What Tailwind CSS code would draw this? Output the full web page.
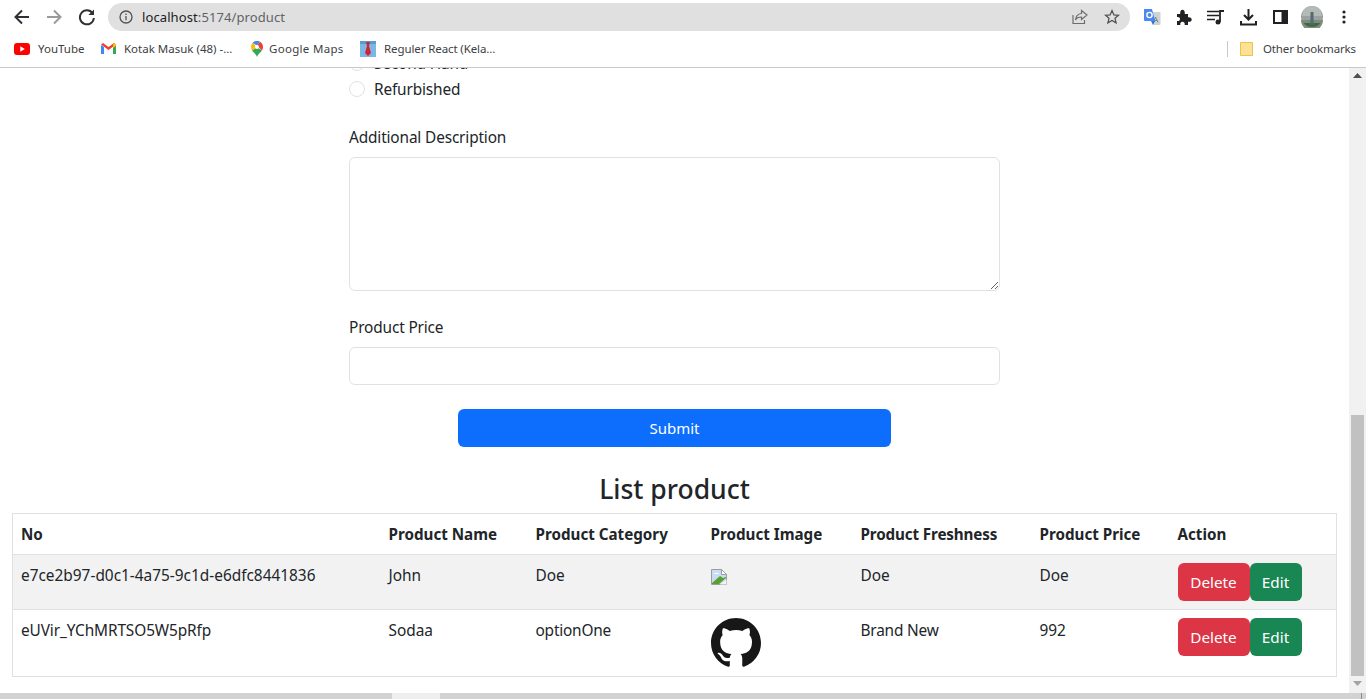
<!doctype html>
<html lang="en">
<head>
<meta charset="utf-8">
<title>Product</title>
<script src="https://cdn.jsdelivr.net/npm/@tailwindcss/browser@4"></script>
</head>
<body class="m-0 overflow-hidden bg-white font-['Noto_Sans','Open_Sans',sans-serif] text-[#212529]">
<div class="flex h-[699px] w-[1366px] flex-col overflow-hidden">

  <!-- toolbar -->
  <header class="flex h-[34px] shrink-0 items-center bg-white">
    <div class="flex w-[108px] items-center pl-[13px] text-[#3c4043]">
      <svg class="h-[18px] w-[18px]" viewBox="0 0 18 18" fill="none" stroke="#303134" stroke-width="2"><path d="M16 9H3M9 2.500 2.500 9 9 15.500"/></svg>
      <svg class="ml-[14px] h-[18px] w-[18px]" viewBox="0 0 18 18" fill="none" stroke="#9a9a9a" stroke-width="2"><path d="M2 9h13M9 2.500 15.500 9 9 15.500"/></svg>
      <svg class="ml-[15px] h-[18px] w-[18px]" viewBox="0 0 18 18" fill="none" stroke="#303134" stroke-width="2"><path d="M14.600 5.200A7 7 0 1 0 15.900 10"/><path d="M16 1.500v5.600h-5.600z" fill="#303134" stroke="none"/></svg>
    </div>
    <div class="flex h-[28px] w-[1022px] items-center rounded-full bg-[#e0e0e0] pl-[11px] pr-[10px]">
      <svg class="h-[14px] w-[14px] shrink-0" viewBox="0 0 14 14" fill="none" stroke="#505356" stroke-width="1.300"><circle cx="7" cy="7" r="6"/><path d="M7 6v4.200M7 3.600v1.300"/></svg>
      <span class="ml-[9px] pt-[1px] text-[13px] tracking-[0.1px]"><span class="text-[#202124]">localhost</span><span class="text-[#5f6368]">:5174/product</span></span>
      <svg class="ml-auto h-[16px] w-[16px]" viewBox="0 0 16 16" fill="none" stroke="#6a6d70" stroke-width="1.200"><path d="M1 6v8.500h11.500V11"/><path d="M9.500 1.500 15 6l-5.500 4.500V8C6.500 8 4.500 9 3.500 11 3.800 7.500 6 4.800 9.500 4.500z"/></svg>
      <svg class="ml-[16px] h-[16px] w-[16px]" viewBox="0 0 16 16" fill="none" stroke="#505356" stroke-width="1.300"><path d="m8 1.600 1.900 4.300 4.600.4-3.500 3 1.100 4.600L8 11.500l-4.100 2.400L5 9.300l-3.500-3 4.600-.4z"/></svg>
    </div>
    <div class="flex flex-1 items-center">
      <svg class="ml-[14px] h-[17px] w-[17px]" viewBox="0 0 17 17"><path d="M6 3h9.500a1 1 0 0 1 1 1v11a1 1 0 0 1-1 1H9z" fill="#cfd3d2"/><path d="m11.500 8 2.400 5.400M11.500 8l-2 5.400M10 11.500h3.300" stroke="#6d8c8a" fill="none"/><path d="M0 0h8l3.200 12H1a1 1 0 0 1-1-1z" fill="#4a89f3"/><path d="M7 12 9 16l2-4z" fill="#3a6fd0"/><circle cx="5.500" cy="6" r="2.600" fill="none" stroke="#fff" stroke-width="1.400"/></svg>
      <svg class="ml-[15px] h-[16px] w-[16px]" viewBox="0 0 16 16" fill="#202124"><path d="M1 5h3.200C4 2 5 .8 6.500.8S9 2 8.800 5H12v3.200c2.600-.3 3.700.8 3.700 2.300s-1.100 2.600-3.700 2.300V16H8.700c.3-2.400-.8-3.300-2.200-3.300S4 13.600 4.300 16H1v-4c2.200.3 3-.7 3-2S3.200 7.700 1 8z"/></svg>
      <svg class="ml-[15px] h-[17px] w-[18px]" viewBox="0 0 18 17" fill="none" stroke="#202124" stroke-width="1.500"><path d="M0 2.500h12M0 6.500h12M0 10.500h8"/><circle cx="11" cy="13" r="2.500" fill="#202124" stroke="none"/><path d="M13 13V2h4" stroke-width="1.800"/></svg>
      <svg class="ml-[15px] h-[18px] w-[17px]" viewBox="0 0 17 18" fill="none" stroke="#202124" stroke-width="2"><path d="M8.500 1v10M4 7l4.500 4.500L13 7M1 13v3.500h15V13"/></svg>
      <svg class="ml-[16px] h-[14px] w-[15px]" viewBox="0 0 15 14"><path d="M0 0h15v14H0zM2 2v10h6.500V2z" fill="#202124" fill-rule="evenodd"/></svg>
      <svg class="ml-[13px] h-[22px] w-[22px]" viewBox="0 0 22 22">
        <circle cx="11" cy="11" r="11" fill="#9aa3a0"/>
        <path d="M2 5a11 11 0 0 1 18 0l1 5H1z" fill="#b4bab8"/>
        <path d="M0 14h22a11 11 0 0 1-22 0z" fill="#7f8a80"/>
        <path d="M2.500 17h17a11 11 0 0 1-17 0z" fill="#3f6a3a"/>
        <path d="M9.500 6h3v6l.5 7h-1.500L11 13l-.5 6H9l.5-7z" fill="#55696f"/>
      </svg>
      <svg class="ml-[19px] h-[14px] w-[4px]" viewBox="0 0 4 14" fill="#202124"><circle cx="2" cy="2" r="1.600"/><circle cx="2" cy="7" r="1.600"/><circle cx="2" cy="12" r="1.600"/></svg>
    </div>
  </header>

  <!-- bookmarks bar -->
  <nav class="flex h-[34px] shrink-0 items-center border-b border-[#c9c9c9] bg-white pb-[4px] text-[11.5px] text-[#3c4043]">
    <svg class="ml-[14px] h-[12px] w-[16px]" viewBox="0 0 16 12"><rect width="16" height="12" rx="3" fill="#f00"/><path d="m6.300 3.300 4.500 2.700-4.500 2.700z" fill="#fff"/></svg>
    <span class="ml-[8px] w-[63px]">YouTube</span>
    <svg class="h-[11px] w-[15px]" viewBox="0 0 15 11"><path d="M0 2v9h3V4z" fill="#4285f4"/><path d="M15 2v9h-3V4z" fill="#34a853"/><path d="M0 1.500 7.500 7 15 1.500 13 0 7.500 4 2 0z" fill="#ea4335"/><path d="M13 0 15 1.500V3l-3 2V1z" fill="#fbbc04"/></svg>
    <span class="ml-[8px] w-[127px] whitespace-nowrap">Kotak Masuk (48) -...</span>
    <svg class="h-[16px] w-[12px]" viewBox="0 0 12 16"><path d="M1 9.500c1.800 2.200 4 3.500 5 6.500.9-3 3.300-4.500 5-6.500L6 6z" fill="#34a853"/><path d="M1.500 2C.5 3 0 4.500 0 6c0 1.300.4 2.400 1 3.500L6 6z" fill="#fbbc04"/><path d="M1.500 2A6 6 0 0 1 9 .8L6 4.500z" fill="#4285f4"/><path d="M9 .8A6 6 0 0 1 12 6c0 1.300-.4 2.400-1 3.500L6 4.500z" fill="#ea4335"/><circle cx="6" cy="6" r="2.100" fill="#fff"/></svg>
    <span class="ml-[6px] w-[91px] whitespace-nowrap tracking-[0.3px]">Google Maps</span>
    <svg class="h-[16px] w-[16px]" viewBox="0 0 16 16"><rect width="16" height="16" fill="#7db6e4"/><path d="M0 0h16v3H0z" fill="#5a9bd0"/><path d="M6 1h4L9 5l2 7-3 3-3-3 2-7z" fill="#cf2436"/></svg>
    <span class="ml-[8px] whitespace-nowrap tracking-[-0.1px]">Reguler React (Kela...</span>
    <div class="ml-auto h-[16px] w-px bg-[#c8c8c8]"></div>
    <svg class="ml-[12px] h-[14px] w-[13px]" viewBox="0 0 13 14"><path d="M.5.500h12v13H.5z" fill="#fde293" stroke="#eec14f"/></svg>
    <span class="ml-[10px] w-[103px] whitespace-nowrap tracking-[-0.15px]">Other bookmarks</span>
  </nav>

  <!-- page viewport -->
  <div class="flex h-[625px] shrink-0">
    <main class="h-full w-[1349px] overflow-hidden bg-white">
      <div class="-mt-[17px]">
        <form class="mx-auto w-[651px] text-[15.4px] leading-[24px] tracking-[-0.15px]">
          <label class="mb-[2px] flex h-[24px] items-center gap-[9px]"><input type="radio" name="f" class="h-[16px] w-[16px] appearance-none rounded-full border border-[#dee2e6]"><span class="pt-[2px]">Second Hand</span></label>
          <label class="flex h-[24px] items-center gap-[9px]"><input type="radio" name="f" class="h-[16px] w-[16px] appearance-none rounded-full border border-[#dee2e6]"><span class="pt-[2px]">Refurbished</span></label>
          <label class="mb-[8px] mt-[24px] block h-[24px] pt-[1px]">Additional Description</label>
          <textarea class="block h-[134px] w-full rounded-[6px] border border-[#dee2e6] bg-white"></textarea>
          <label class="mb-[8px] mt-[24px] block h-[24px] pt-[1px]">Product Price</label>
          <input type="text" class="block h-[38px] w-full rounded-[6px] border border-[#dee2e6] bg-white">
          <button type="button" class="mx-auto mt-[24px] block h-[38px] w-[433px] rounded-[6px] bg-[#0d6efd] text-center text-[15px] tracking-normal text-white">Submit</button>
        </form>
        <h2 class="mb-[8px] mt-[24px] h-[34px] pt-[1px] text-center text-[26.5px] font-medium leading-[34px]">List product</h2>
        <div class="mx-[12px] w-[1325px]">
          <table class="w-full table-fixed border-collapse border border-[#dee2e6] text-left text-[15.4px] leading-[24px]">
            <thead>
              <tr class="border-b border-[#dee2e6] text-[15.2px]">
                <th class="w-[368px] p-[8px] font-bold">No</th>
                <th class="w-[147px] p-[8px] font-bold">Product Name</th>
                <th class="w-[175px] p-[8px] font-bold">Product Category</th>
                <th class="w-[150px] p-[8px] font-bold">Product Image</th>
                <th class="w-[179px] p-[8px] font-bold tracking-[-0.12px]">Product Freshness</th>
                <th class="w-[138px] p-[8px] font-bold">Product Price</th>
                <th class="p-[8px] font-bold">Action</th>
              </tr>
            </thead>
            <tbody>
              <tr class="border-b border-[#dee2e6] bg-[#f2f2f2] align-top">
                <td class="px-[8px] pb-[7px] pt-[9px]">e7ce2b97-d0c1-4a75-9c1d-e6dfc8441836</td>
                <td class="px-[8px] pb-[7px] pt-[9px]">John</td>
                <td class="px-[8px] pb-[7px] pt-[9px]">Doe</td>
                <td class="p-[8px]">
                  <svg class="mt-[6px] h-[16px] w-[16px]" viewBox="0 0 16 16"><path d="M.5.500h10l5 5v10H.5z" fill="#c9dcf5" stroke="#9c9c9c"/><path d="M3 5a2 1 0 0 1 5 0z" fill="#fff"/><path d="M1 14 9 7l3 2 3-1v1l-7 6H1z" fill="#5aa02c"/><path d="M9 15.500l6.500-5v5z" fill="#f4f4f4"/><path d="M10.500.500v5h5z" fill="#fff" stroke="#9c9c9c"/></svg>
                </td>
                <td class="px-[8px] pb-[7px] pt-[9px]">Doe</td>
                <td class="px-[8px] pb-[7px] pt-[9px]">Doe</td>
                <td class="p-[8px]">
                  <div class="flex text-[15.3px]">
                    <button type="button" class="h-[38px] w-[72px] rounded-[6px] bg-[#dc3545] text-white">Delete</button>
                    <button type="button" class="h-[38px] w-[52px] rounded-[6px] bg-[#198754] text-white">Edit</button>
                  </div>
                </td>
              </tr>
              <tr class="align-top">
                <td class="px-[8px] pb-[7px] pt-[9px] tracking-[-0.1px]">eUVir_YChMRTSO5W5pRfp</td>
                <td class="px-[8px] pb-[7px] pt-[9px]">Sodaa</td>
                <td class="px-[8px] pb-[7px] pt-[9px] tracking-[-0.2px]">optionOne</td>
                <td class="p-[8px]">
                  <svg class="block h-[50px] w-[50px]" viewBox="0 0 16 16" fill="#181717"><path d="M8 0C3.580 0 0 3.580 0 8c0 3.540 2.290 6.530 5.470 7.590.4.070.55-.17.55-.38 0-.19-.01-.82-.01-1.490-2.010.37-2.530-.49-2.690-.94-.09-.23-.48-.94-.82-1.130-.28-.15-.68-.52-.01-.53.630-.01 1.080.58 1.230.82.720 1.210 1.870.87 2.330.66.070-.52.28-.87.51-1.070-1.780-.2-3.640-.89-3.640-3.950 0-.87.31-1.590.82-2.150-.08-.2-.36-1.020.08-2.120 0 0 .67-.21 2.200.82.640-.18 1.320-.27 2-.27.680 0 1.360.09 2 .27 1.530-1.040 2.200-.82 2.200-.82.440 1.100.16 1.920.08 2.120.51.56.82 1.270.82 2.150 0 3.070-1.870 3.750-3.650 3.950.29.25.54.73.54 1.480 0 1.070-.01 1.930-.01 2.200 0 .21.15.46.55.38A8.013 8.013 0 0016 8c0-4.420-3.580-8-8-8z"/></svg>
                </td>
                <td class="px-[8px] pb-[7px] pt-[9px] tracking-[-0.2px]">Brand New</td>
                <td class="px-[8px] pb-[7px] pt-[9px]">992</td>
                <td class="p-[8px]">
                  <div class="flex text-[15.3px]">
                    <button type="button" class="h-[38px] w-[72px] rounded-[6px] bg-[#dc3545] text-white">Delete</button>
                    <button type="button" class="h-[38px] w-[52px] rounded-[6px] bg-[#198754] text-white">Edit</button>
                  </div>
                </td>
              </tr>
            </tbody>
          </table>
        </div>
      </div>
    </main>
    <!-- vertical scrollbar -->
    <aside class="flex h-full w-[17px] flex-col items-center bg-[#f1f1f1]">
      <svg class="mt-[5px] h-[5px] w-[9px]" viewBox="0 0 9 5" fill="#505050"><path d="M4.500 0 9 5H0z"/></svg>
      <div class="mx-auto mt-[337px] h-[261px] w-[13px] bg-[#c1c1c1]"></div>
      <svg class="mt-[5px] h-[5px] w-[9px]" viewBox="0 0 9 5" fill="#a3a3a3"><path d="M0 0h9L4.500 5z"/></svg>
    </aside>
  </div>

  <!-- horizontal scrollbar -->
  <div class="flex h-[6px] shrink-0 bg-[#d2d2d2]">
    <div class="ml-[392px] h-full w-[48px] bg-[#eeeeee]"></div>
    <div class="ml-[921px] h-full w-px bg-[#8a8a8a]"></div>
  </div>
</div>
</body>
</html>
